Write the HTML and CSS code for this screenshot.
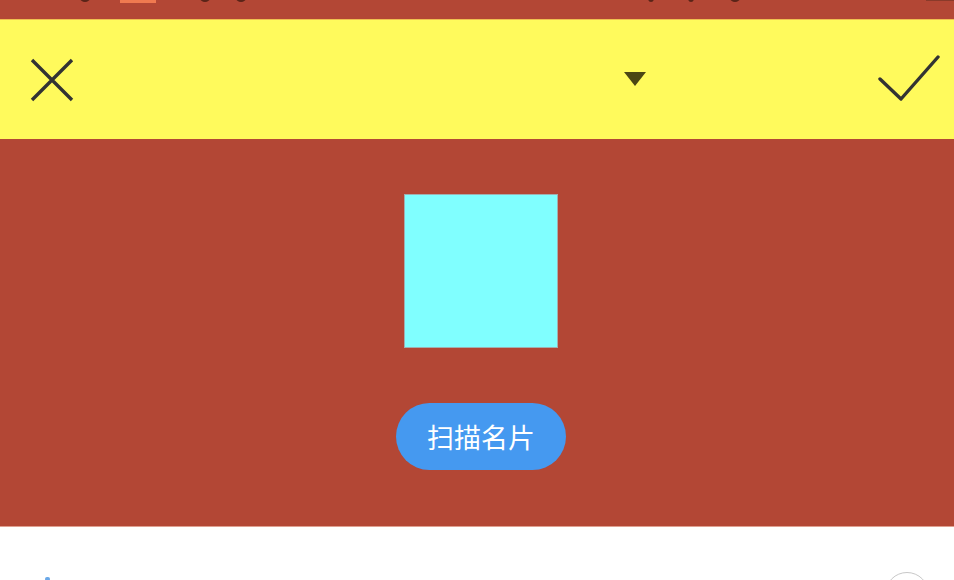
FILE: index.html
```html
<!DOCTYPE html>
<html lang="zh">
<head>
<meta charset="utf-8">
<link rel="stylesheet" href="styles.css">
</head>
<body>
<div class="page">
  <div class="status">
    <span class="dot d1"></span>
    <span class="battery"></span>
    <span class="dot d2"></span>
    <span class="dot d3"></span>
    <span class="dot d4"></span>
    <span class="dot d5"></span>
    <span class="dot d6"></span>
    <span class="line"></span>
  </div>
  <div class="toolbar">
    <svg class="icon close" width="44" height="44" viewBox="0 0 44 44"><path d="M2 2L42 42M42 2L2 42" stroke="#333" stroke-width="3.4" fill="none"/></svg>
    <div class="spacer"></div>
    <svg class="caret" width="24" height="14" viewBox="0 0 24 14"><path d="M1 0H23L12 14Z" fill="#4b4614"/></svg>
    <div class="spacer2"></div>
    <svg class="icon check" width="62" height="48" viewBox="0 0 62 48"><path d="M2 25L23 45L60 3" stroke="#333" stroke-width="3.4" fill="none" stroke-linecap="round" stroke-linejoin="round"/></svg>
  </div>
  <div class="content">
    <div class="square"></div>
    <button class="scan">扫描名片</button>
  </div>
  <div class="bottom">
    <span class="blue-mark"></span>
    <span class="circle"></span>
  </div>
</div>
</body>
</html>
```
FILE: styles.css
```css
html, body {
  margin: 0;
  padding: 0;
  overflow: hidden;
}
body {
  width: 954px;
  height: 580px;
  background: #ffffff;
  font-family: "Noto Sans CJK SC", "Noto Sans", sans-serif;
}
.page {
  display: flex;
  flex-direction: column;
  height: 580px;
  overflow: hidden;
}
.status {
  height: 19px;
  background: #b34735;
  position: relative;
  border-bottom: 1px solid #f0c050;
  flex: none;
}
.dot {
  position: absolute;
  top: -6px;
  width: 10px;
  height: 8px;
  border-radius: 50%;
  background: #5a2418;
}
.d1 { left: 80px; }
.d2 { left: 200px; }
.d3 { left: 236px; }
.d4 { left: 648px; width: 6px; }
.d5 { left: 688px; width: 6px; }
.d6 { left: 730px; }
.battery {
  position: absolute;
  left: 120px;
  top: 0;
  width: 36px;
  height: 3px;
  background: #f07a50;
}
.line {
  position: absolute;
  right: 0;
  top: 0;
  width: 28px;
  height: 1px;
  background: #8a3a2a;
}
.toolbar {
  height: 119px;
  background: #fffa5c;
  display: flex;
  align-items: center;
  padding: 0 14px 0 30px;
  flex: none;
}
.spacer {
  width: 549px;
}
.caret {
  margin-top: -2px;
}
.spacer2 {
  flex: 1;
}
.check {
  margin-top: -3px;
}
.content {
  height: 388px;
  background: #b34735;
  display: flex;
  flex-direction: column;
  align-items: center;
  padding-top: 56px;
  padding-left: 8px;
  box-sizing: border-box;
  gap: 56px;
  border-bottom: 1px solid #e0a090;
  flex: none;
}
.square {
  width: 152px;
  height: 152px;
  background: #80ffff;
  margin-left: -1px;
  box-shadow: 0 0 0 1px #a0b0b0;
}
.scan {
  width: 170px;
  height: 67px;
  border: none;
  border-radius: 34px;
  background: #4599f0;
  color: #ffffff;
  font-family: "Noto Sans CJK SC", sans-serif;
  font-size: 27px;
  line-height: 1;
  padding: 0;
  cursor: pointer;
}
.bottom {
  flex: 1;
  position: relative;
  background: #ffffff;
  overflow: hidden;
}
.blue-mark {
  position: absolute;
  left: 45px;
  top: 50px;
  width: 5px;
  height: 4px;
  border-radius: 2px;
  background: #6aa8e8;
}
.circle {
  position: absolute;
  left: 885px;
  top: 45px;
  width: 42px;
  height: 42px;
  border-radius: 50%;
  border: 1.5px solid #c8c8c8;
}
```
